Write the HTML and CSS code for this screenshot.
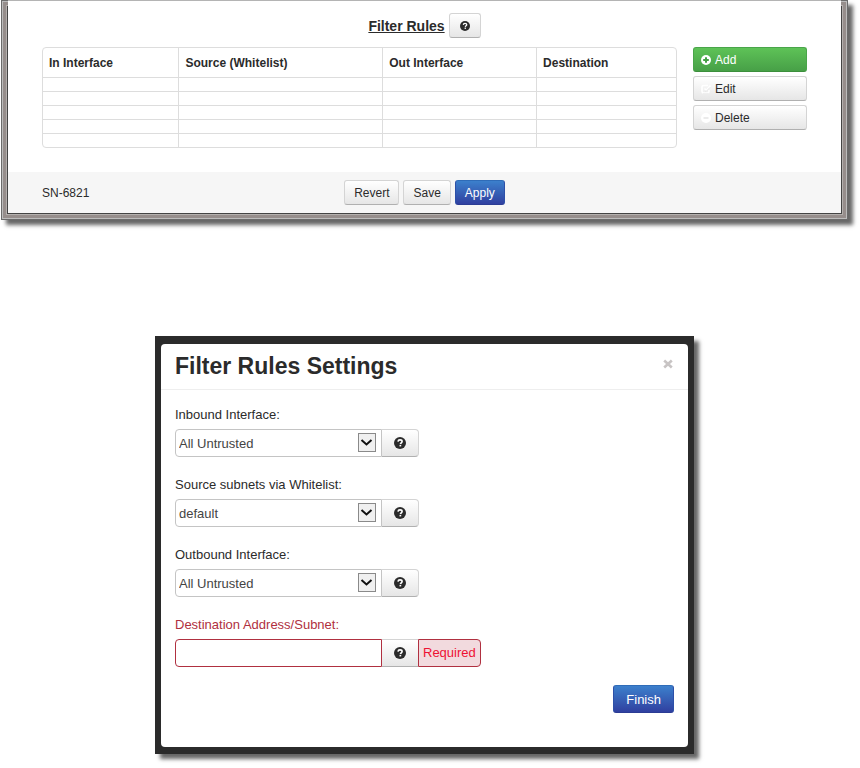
FILE: index.html
```html
<!DOCTYPE html>
<html lang="en">
<head>
    <meta charset="UTF-8">
    <meta name="viewport" content="width=device-width, initial-scale=1.0">
    <title>Filter Rules</title>
    <link rel="stylesheet" href="styles.css">
</head>
<body>
    <!-- Shared icons -->
    <svg class="sprite" aria-hidden="true">
        <symbol id="icon-help" viewBox="0 0 12 12">
            <circle cx="6" cy="6" r="6" fill="#2b2b2b"/>
            <path d="M4 4.6C4.1 3.4 4.9 2.9 6 2.9c1.2 0 2.1.6 2.1 1.6C8.1 5.7 6.6 5.8 6.4 7" fill="none" stroke="#fff" stroke-width="1.6"/>
            <rect x="5.5" y="7.9" width="1.7" height="1.5" fill="#fff"/>
        </symbol>
        <symbol id="icon-arrow" viewBox="0 0 18 19">
            <rect x="0.5" y="0.5" width="17" height="18" fill="#f0f0f0" stroke="#8a8a8a"/>
            <path d="M3.5 7l5 4.5 5-4.5" fill="none" stroke="#111" stroke-width="2"/>
        </symbol>
    </svg>

    <div class="window">
        <div class="window-body">
            <div class="title-row">
                <h3>Filter Rules</h3>
                <button type="button" class="btn help-btn" aria-label="Help"><svg class="icon-sm"><use href="#icon-help"/></svg></button>
            </div>
            <div class="rules">
                <div class="table-wrap">
                    <table>
                        <thead>
                            <tr>
                                <th class="col-in">In Interface</th>
                                <th class="col-source">Source (Whitelist)</th>
                                <th class="col-out">Out Interface</th>
                                <th>Destination</th>
                            </tr>
                        </thead>
                        <tbody>
                            <tr><td></td><td></td><td></td><td></td></tr>
                            <tr><td></td><td></td><td></td><td></td></tr>
                            <tr><td></td><td></td><td></td><td></td></tr>
                            <tr><td></td><td></td><td></td><td></td></tr>
                            <tr><td></td><td></td><td></td><td></td></tr>
                        </tbody>
                    </table>
                </div>
                <div class="actions">
                    <button type="button" class="btn btn-green">
                        <svg class="icon-sm" viewBox="0 0 10 10"><circle cx="5" cy="5" r="5" fill="#fff"/><path d="M5 2.2v5.6M2.2 5h5.6" stroke="#45a045" stroke-width="2"/></svg>
                        Add
                    </button>
                    <button type="button" class="btn">
                        <svg class="icon-sm" viewBox="0 0 10 10"><path d="M7 1.5H2.5Q1 1.5 1 3v4.5Q1 9 2.5 9h4Q8 9 8 7.5V6" fill="none" stroke="#fff" stroke-width="1.6"/><path d="M3.5 4.5l1.7 1.7L9.5 1.5" fill="none" stroke="#fff" stroke-width="1.6"/><path d="M2 9.8h5.5M4 7l1.2.3L9 3.4" fill="none" stroke="#ddd" stroke-width=".6"/></svg>
                        Edit
                    </button>
                    <button type="button" class="btn">
                        <svg class="icon-sm" viewBox="0 0 10 10"><circle cx="5" cy="5" r="5" fill="#fff"/><path d="M2.5 5h5" stroke="#e4e4e4" stroke-width="1.5"/></svg>
                        Delete
                    </button>
                </div>
            </div>
        </div>
        <div class="footer">
            <span>SN-6821</span>
            <div class="footer-btns">
                <button type="button" class="btn">Revert</button>
                <button type="button" class="btn">Save</button>
                <button type="button" class="btn btn-blue">Apply</button>
            </div>
        </div>
    </div>

    <div class="backdrop">
        <form class="dialog">
            <div class="dialog-header">
                <h1>Filter Rules Settings</h1>
                <button type="button" class="close" aria-label="Close"><svg class="icon-sm" viewBox="0 0 10 10"><path d="M1.2 1.5l7.6 7M8.8 1.5l-7.6 7" stroke="#c8c4c4" stroke-width="2.6"/></svg></button>
            </div>
            <div class="dialog-body">
                <div class="field">
                    <label for="inbound">Inbound Interface:</label>
                    <div class="control">
                        <div class="select">
                            <select id="inbound"><option>All Untrusted</option></select>
                            <svg class="arrow"><use href="#icon-arrow"/></svg>
                        </div>
                        <button type="button" class="btn addon" aria-label="Help"><svg class="icon"><use href="#icon-help"/></svg></button>
                    </div>
                </div>
                <div class="field">
                    <label for="source">Source subnets via Whitelist:</label>
                    <div class="control">
                        <div class="select">
                            <select id="source"><option>default</option></select>
                            <svg class="arrow"><use href="#icon-arrow"/></svg>
                        </div>
                        <button type="button" class="btn addon" aria-label="Help"><svg class="icon"><use href="#icon-help"/></svg></button>
                    </div>
                </div>
                <div class="field">
                    <label for="outbound">Outbound Interface:</label>
                    <div class="control">
                        <div class="select">
                            <select id="outbound"><option>All Untrusted</option></select>
                            <svg class="arrow"><use href="#icon-arrow"/></svg>
                        </div>
                        <button type="button" class="btn addon" aria-label="Help"><svg class="icon"><use href="#icon-help"/></svg></button>
                    </div>
                </div>
                <div class="field error">
                    <label for="destination">Destination Address/Subnet:</label>
                    <div class="control">
                        <input type="text" id="destination">
                        <button type="button" class="btn addon" aria-label="Help"><svg class="icon"><use href="#icon-help"/></svg></button>
                        <span class="required">Required</span>
                    </div>
                </div>
                <div class="dialog-footer">
                    <button type="submit" class="btn btn-blue finish">Finish</button>
                </div>
            </div>
        </form>
    </div>
</body>
</html>
```

FILE: styles.css
```css
* {
    margin: 0;
    padding: 0;
    box-sizing: border-box;
}

body {
    font-family: "Liberation Sans", Arial, sans-serif;
    font-size: 12px;
    color: #2b2b2b;
    background: #fff;
    padding: 0 12px 12px 1px;
}

svg {
    display: block;
    flex: none;
}

.sprite {
    display: none;
}

.icon-sm {
    width: 10px;
    height: 10px;
}

.icon {
    width: 12px;
    height: 12px;
}

/* Buttons */
.btn {
    display: flex;
    align-items: center;
    justify-content: center;
    height: 25px;
    padding: 0 9px;
    font-family: inherit;
    font-size: 12px;
    color: #2b2b2b;
    background: linear-gradient(#fff, #e6e6e6);
    border: 1px solid #d4d4d4;
    border-bottom-color: #b0b0b0;
    border-radius: 3px;
    cursor: pointer;
}

.btn-green {
    color: #fff;
    background: linear-gradient(#5ec257, #47a047);
    border-color: #49a549 #49a549 #3c8f3c;
}

.btn-blue {
    color: #fff;
    background: linear-gradient(#3c80cc, #3040a0);
    border-color: #2f6cb8 #2d50a8 #2b3c94;
}

/* Filter rules window */
.window {
    padding: 0 7px 7px;
    box-shadow:
        inset 0 0 0 1px #6b6b6b,
        inset 0 0 0 2px #bcbcbc,
        inset 0 0 0 5px #968e8c,
        inset 0 0 0 6px #b4b0ae,
        inset 0 0 0 7px #444,
        5px 5px 4px rgba(0, 0, 0, 0.6);
}

.window-body {
    padding: 12px 34px 24px;
    background: #fff;
    border-top: 1px solid #b4b4b4;
}

.title-row {
    display: flex;
    justify-content: center;
    align-items: center;
    gap: 4px;
    margin-bottom: 9px;
}

.title-row h3 {
    font-size: 14px;
    line-height: 20px;
    text-decoration: underline;
}

.help-btn {
    width: 32px;
}

.rules {
    display: flex;
    gap: 16px;
}

.table-wrap {
    flex: 1;
    border: 1px solid #ddd;
    border-radius: 4px;
}

table {
    width: 100%;
    table-layout: fixed;
    border-collapse: separate;
    border-spacing: 0;
}

th {
    height: 29px;
    padding: 0 6px;
    font-size: 12px;
    text-align: left;
}

td {
    height: 14px;
    border-top: 1px solid #ddd;
}

th + th,
td + td {
    border-left: 1px solid #ddd;
}

.col-in {
    width: 21.4%;
}

.col-source {
    width: 32.2%;
}

.col-out {
    width: 24.3%;
}

.actions {
    display: flex;
    flex-direction: column;
    gap: 4px;
    width: 114px;
}

.actions .btn {
    justify-content: flex-start;
    gap: 4px;
    padding: 0 7px;
}

.footer {
    display: grid;
    grid-template-columns: 1fr auto 1fr;
    align-items: center;
    padding: 8px 34px;
    background: #f6f6f6;
}

.footer-btns {
    display: flex;
    gap: 4px;
}

/* Settings dialog */
.backdrop {
    max-width: 539px;
    margin: 116px auto 0;
    padding: 8px 6px 7px;
    background: #2b2b2b;
    box-shadow: 5px 5px 4px rgba(0, 0, 0, 0.6);
}

.dialog {
    background: #fff;
    border-radius: 4px;
}

.dialog-header {
    display: flex;
    justify-content: space-between;
    align-items: center;
    height: 46px;
    padding: 0 14px;
    border-bottom: 1px solid #eee;
}

.dialog-header h1 {
    font-size: 23px;
}

.close {
    padding: 0 1px 6px;
    background: none;
    border: none;
    cursor: pointer;
}

.dialog-body {
    padding: 15px 14px 34px;
}

.field {
    margin-bottom: 18px;
    font-size: 13px;
}

.field label {
    display: block;
    line-height: 20px;
    margin-bottom: 4px;
}

.control {
    display: flex;
}

.select {
    position: relative;
}

.control select,
.control input {
    display: block;
    width: 207px;
    height: 28px;
    padding: 0 3px;
    font-family: inherit;
    font-size: 13px;
    color: #444;
    background: #fff;
    border: 1px solid #c4c4c4;
    border-radius: 4px 0 0 4px;
    appearance: none;
}

.arrow {
    position: absolute;
    top: 4px;
    right: 6px;
    width: 18px;
    height: 19px;
    pointer-events: none;
}

.addon {
    width: 37px;
    height: 28px;
    padding: 0;
    border-left: none;
    border-radius: 0 4px 4px 0;
}

.error label {
    color: #b03040;
}

.error .control input {
    border-color: #b03040;
}

.error .addon {
    width: 36px;
    border-right: none;
    border-radius: 0;
}

.required {
    height: 28px;
    padding: 0 4px;
    font-size: 13px;
    line-height: 26px;
    color: #ee1133;
    background: #f2dade;
    border: 1px solid #b03040;
    border-radius: 0 4px 4px 0;
}

.dialog-footer {
    display: flex;
    justify-content: flex-end;
}

.finish {
    height: 28px;
    padding: 0 12px;
    font-size: 13px;
}
```
